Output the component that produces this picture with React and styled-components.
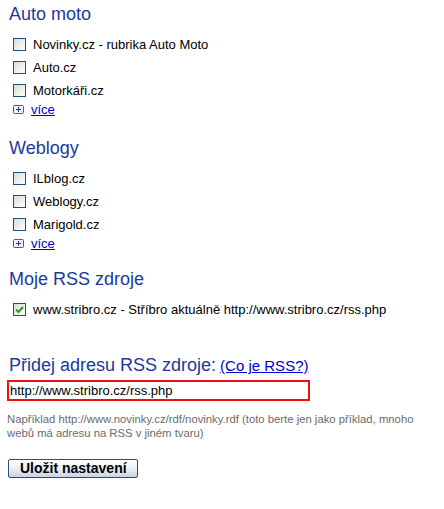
import React from 'react';
import styled, { createGlobalStyle } from 'styled-components';

const Global = createGlobalStyle`
  body {
    margin: 0;
    background: #fff;
    font-family: "Liberation Sans", Arial, sans-serif;
  }
`;

const Page = styled.div`
  padding: 3px 0 0 9px;
  width: 435px;
`;

const Heading = styled.h2`
  margin: 0;
  font-size: 18px;
  font-weight: normal;
  line-height: 22px;
  color: #1a3a9c;
`;

const Section = styled.section`
  margin-bottom: ${(p) => p.$gap || 18}px;
`;

const List = styled.div`
  display: flex;
  flex-direction: column;
  padding: 8px 0 0 4px;
`;

const Row = styled.label`
  display: flex;
  align-items: center;
  gap: 7px;
  height: 23px;
  font-size: 13px;
  color: #000;
`;

const Box = styled.span`
  width: 11px;
  height: 11px;
  border: 1px solid #1c5180;
  background: linear-gradient(135deg, #dcdcd6 0%, #f4f4f0 70%, #fff 100%);
  display: flex;
  align-items: center;
  justify-content: center;
  flex-shrink: 0;
`;

const More = styled.div`
  display: flex;
  align-items: center;
  gap: 7px;
  height: 18px;
  margin-top: -2px;
  font-size: 13px;
`;

const Link = styled.a`
  color: #0000cc;
  text-decoration: underline;
  font-size: ${(p) => p.$size || 13}px;
  cursor: pointer;
`;

const AddTitle = styled.div`
  display: flex;
  align-items: baseline;
  gap: 4px;
  font-size: 18px;
  color: #1a3a9c;
  line-height: 22px;
`;

const Input = styled.input`
  display: block;
  box-sizing: border-box;
  margin: 3px 0 0 -2px;
  width: 303px;
  height: 21px;
  border: 2px solid #ee1111;
  padding: 0 1px;
  font-family: "Liberation Sans", Arial, sans-serif;
  font-size: 13px;
  color: #000;
  outline: none;
`;

const Hint = styled.p`
  margin: 11px 0 0 -2px;
  width: 425px;
  font-size: 11.3px;
  line-height: 14px;
  color: #6b6b6b;
`;

const Button = styled.button`
  margin: 19px 0 0 -1px;
  height: 19px;
  padding: 0 10px 0 11px;
  border: 1px solid #2a4d7c;
  border-radius: 2px;
  background: linear-gradient(#ffffff 0%, #eef1f7 45%, #c9d3e6 100%);
  font-family: "Liberation Sans", Arial, sans-serif;
  font-weight: bold;
  font-size: 14px;
  line-height: 17px;
  color: #000;
`;

const Check = () => (
  <svg width="9" height="9" viewBox="0 0 9 9">
    <path d="M1 4.5 L3.5 7 L8 2" stroke="#21a121" strokeWidth="2" fill="none" />
  </svg>
);

const Plus = () => (
  <svg width="11" height="9" viewBox="0 0 11 9">
    <rect x="0.5" y="0.5" width="10" height="8" rx="1" fill="#eef3ff" stroke="#2a5bd7" />
    <path d="M3 4.5 H8 M5.5 2 V7" stroke="#1a3aa0" strokeWidth="1" />
  </svg>
);

const Item = ({ label, checked }) => (
  <Row>
    <Box>{checked && <Check />}</Box>
    {label}
  </Row>
);

const Group = ({ title, items, more, gap }) => (
  <Section $gap={gap}>
    <Heading>{title}</Heading>
    <List>
      {items.map((it) => (
        <Item key={it} label={it} />
      ))}
      {more && (
        <More>
          <Plus />
          <Link>více</Link>
        </More>
      )}
    </List>
  </Section>
);

export default function App() {
  return (
    <Page>
      <Global />
      <Group
        title="Auto moto"
        items={['Novinky.cz - rubrika Auto Moto', 'Auto.cz', 'Motorkáři.cz']}
        more
        gap={19}
      />
      <Group title="Weblogy" items={['ILblog.cz', 'Weblogy.cz', 'Marigold.cz']} more gap={16} />
      <Section $gap={33}>
        <Heading>Moje RSS zdroje</Heading>
        <List>
          <Item checked label="www.stribro.cz - Stříbro aktuálně http://www.stribro.cz/rss.php" />
        </List>
      </Section>
      <AddTitle>
        Přidej adresu RSS zdroje: <Link $size={15}>(Co je RSS?)</Link>
      </AddTitle>
      <Input defaultValue="http://www.stribro.cz/rss.php" />
      <Hint>
        Například http://www.novinky.cz/rdf/novinky.rdf (toto berte jen jako příklad, mnoho webů má
        adresu na RSS v jiném tvaru)
      </Hint>
      <Button>Uložit nastavení</Button>
    </Page>
  );
}
